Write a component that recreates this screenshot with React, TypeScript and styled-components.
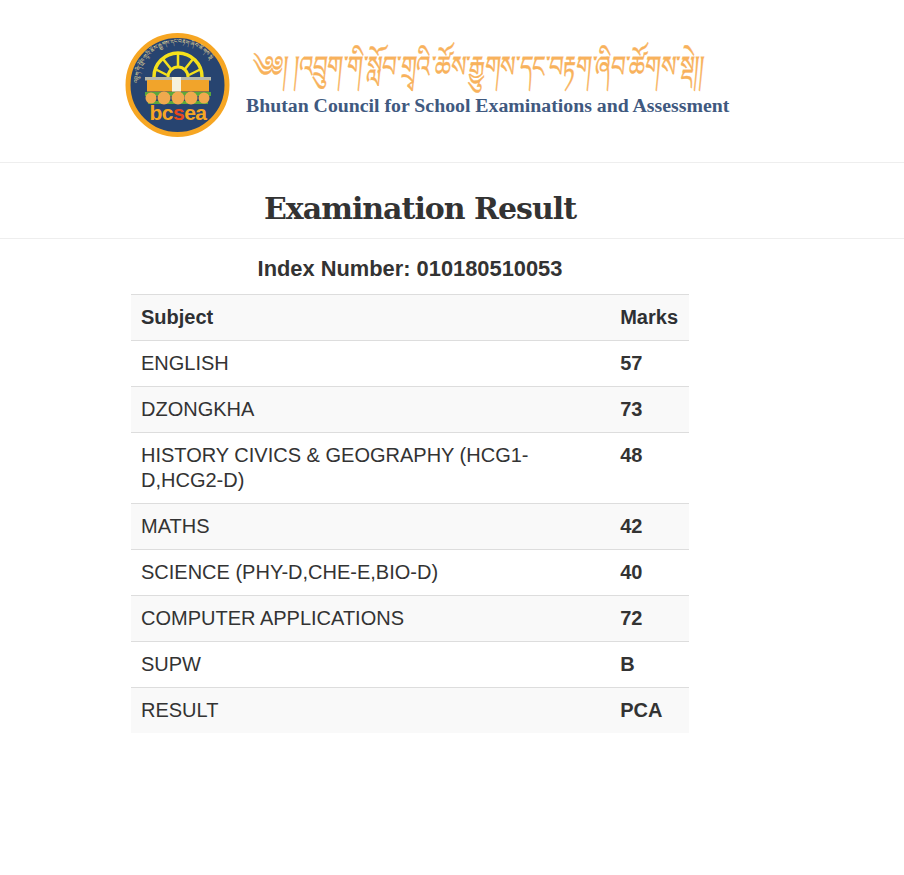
import React from "react";
import styled, { createGlobalStyle } from "styled-components";

const Global = createGlobalStyle`
  html, body { margin: 0; padding: 0; background: #fff; }
  body { font-family: "Liberation Sans", Arial, sans-serif; color: #333; }
`;
const Page = styled.div`width: 904px; height: 875px; overflow: hidden;`;
const Banner = styled.header`
  height: 162px; display: flex; align-items: flex-start; padding: 32px 0 0 125px; box-sizing: border-box; gap: 16px;
`;
const Words = styled.div`display: flex; flex-direction: column; padding-top: 12px;`;
const Tibetan = styled.div`
  font-family: "Noto Sans", "DejaVu Sans", serif; font-size: 30px; line-height: 44px; color: #f8b25c; white-space: nowrap;
  -webkit-text-stroke: 0.4px #f8b25c;
  margin-left: 6px; width: 456px; transform: scaleX(0.742) skewX(-8deg); transform-origin: left center;
`;
const Council = styled.div`
  font-family: "Liberation Serif", serif; font-weight: bold; font-size: 19.800px; line-height: 24px; color: #40597f; white-space: nowrap; margin-top: 5px;
`;
const Rule = styled.hr`border: 0; border-top: 1px solid #eee; margin: 0;`;
const Title = styled.h2`
  margin: 0; height: 75px; line-height: 91px; text-align: center; font-family: "DejaVu Serif", serif; font-size: 30px; font-weight: bold; letter-spacing: -1px; color: #333; padding-right: 64px; box-sizing: border-box;
`;
const Content = styled.main`width: 558px; margin-left: 131px;`;
const Index = styled.h4`margin: 0; height: 55px; line-height: 60px; font-size: 21.850px; font-weight: bold; text-align: center; color: #333;`;
const Table = styled.table`width: 100%; border-collapse: collapse; font-size: 20px; line-height: 25px; color: #333;`;
const Row = styled.tr<{ $odd: boolean }>`background: ${(p) => (p.$odd ? "#f9f9f9" : "#fff")};`;
const Cell = styled.td`padding: 10px; border-top: 1px solid #ddd; vertical-align: top;`;
const Mark = styled(Cell)`font-weight: bold; white-space: nowrap; padding-right: 11px;`;
const Head = styled(Cell)`font-weight: bold; color: #2e3033;`;
const HeadMark = styled(Mark)`color: #2e3033;`;
const SealText = styled.text`font-family: "Liberation Sans", sans-serif; font-weight: bold; font-size: 21px; fill: #f6a623; text-anchor: middle; letter-spacing: -0.5px;`;
const SealRing = styled.text`font-family: "Noto Sans", "DejaVu Sans", serif; font-size: 5.500px; fill: #eadf9a;`;

const rows = [
  ["ENGLISH", "57"], ["DZONGKHA", "73"], ["HISTORY CIVICS & GEOGRAPHY (HCG1-D,HCG2-D)", "48"], ["MATHS", "42"],
  ["SCIENCE (PHY-D,CHE-E,BIO-D)", "40"], ["COMPUTER APPLICATIONS", "72"], ["SUPW", "B"], ["RESULT", "PCA"],
];

function Seal() {
  return (
    <svg width="105" height="106" viewBox="0 -1 105 106">
      <defs>
        <path id="sealArc" d="M13 50a40 40 0 0 1 80 0" />
      </defs>
      <circle cx="52.500" cy="52" r="49.500" fill="#274470" stroke="#f6a623" strokeWidth="5" />
      <SealRing><textPath href="#sealArc">འབྲུག་གི་སློབ་གྲྭའི་ཚོས་རྒྱུགས་དང་བརྟག་ཞིབ་ཚོགས་སྡེ</textPath></SealRing>
      <g fill="none" stroke="#f5e11c" strokeWidth="3">
        <path d="M29 44a24 24 0 0 1 48 0" strokeWidth="3.500" />
        <path d="M43 44a10 10 0 0 1 20 0" />
        <path d="M53 20v13M38 26l8 10M68 26l-8 10M30 36l12 6M76 36l-12 6" strokeWidth="2.500" />
      </g>
      <rect x="20" y="44" width="66" height="3.500" fill="#b9b9a8" />
      <rect x="22" y="47" width="62" height="11.500" fill="#f1a42b" />
      <rect x="47" y="44" width="9" height="14.500" fill="#f4f1dc" />
      <rect x="20" y="59" width="66" height="4" fill="#5aa83c" />
      <rect x="23" y="68" width="60" height="3" fill="#5aa83c" />
      <g fill="#f0a94e">
        <circle cx="26" cy="65" r="5.500" /><circle cx="39" cy="65" r="6.500" /><circle cx="53" cy="65" r="6.500" /><circle cx="66" cy="65" r="6.500" /><circle cx="79" cy="65" r="5.500" />
      </g>
      <SealText x="53" y="87">bc<tspan fill="#e8481c">s</tspan>ea</SealText>
    </svg>
  );
}

export default function App() {
  return (
    <Page>
      <Global />
      <Banner>
        <Seal />
        <Words>
          <Tibetan>༄༅། །འབྲུག་གི་སློབ་གྲྭའི་ཚོས་རྒྱུགས་དང་བརྟག་ཞིབ་ཚོགས་སྡེ།།</Tibetan>
          <Council>Bhutan Council for School Examinations and Assessment</Council>
        </Words>
      </Banner>
      <Rule />
      <Title>Examination Result</Title>
      <Rule />
      <Content>
        <Index>Index Number: 010180510053</Index>
        <Table>
          <tbody>
            <Row $odd><Head>Subject</Head><HeadMark>Marks</HeadMark></Row>
            {rows.map(([s, m], i) => (
              <Row key={s} $odd={i % 2 === 1}><Cell>{s}</Cell><Mark>{m}</Mark></Row>
            ))}
          </tbody>
        </Table>
      </Content>
    </Page>
  );
}
